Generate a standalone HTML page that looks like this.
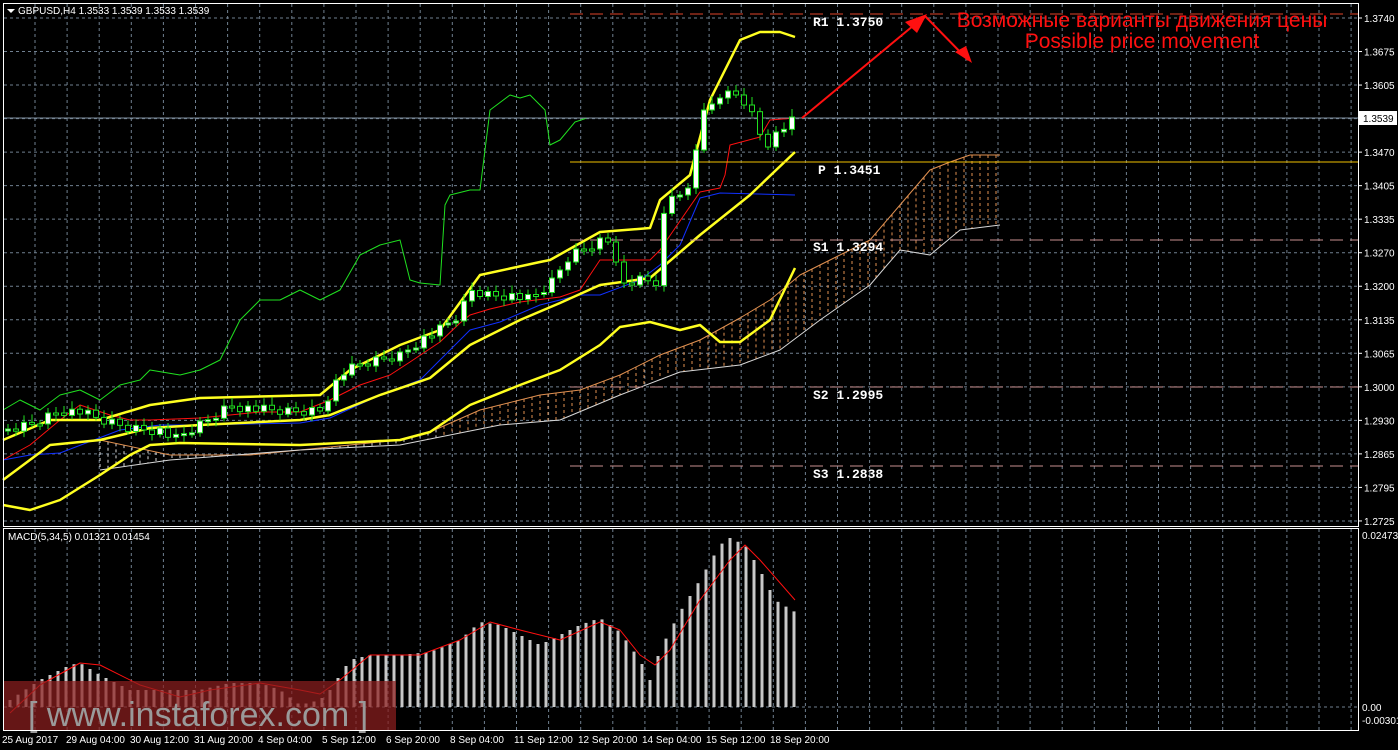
<!DOCTYPE html>
<html><head><meta charset="utf-8"><style>
html,body{margin:0;padding:0;background:#000;width:1398px;height:750px;overflow:hidden}
svg{display:block}
text{font-family:"Liberation Sans",sans-serif}
.ax{fill:#fff;font-size:10px}
.pv{fill:#fff;font-family:"Liberation Mono",monospace;font-size:13px;font-weight:bold}
</style></head><body>
<svg id="s" width="1398" height="750" xmlns="http://www.w3.org/2000/svg">
<rect width="1398" height="750" fill="#000"/>
<g id="grid"></g>
<g id="cloud"></g>
<g id="lines"></g>
<line x1="570" y1="14" x2="1358" y2="14" stroke="#e0442a" stroke-width="1" stroke-dasharray="13,7"/>
<line x1="570" y1="162" x2="1358" y2="162" stroke="#f0c000" stroke-width="1"/>
<line x1="570" y1="240" x2="1358" y2="240" stroke="#c89090" stroke-width="1" stroke-dasharray="13,7"/>
<line x1="570" y1="387" x2="1358" y2="387" stroke="#c89090" stroke-width="1" stroke-dasharray="13,7"/>
<line x1="570" y1="466" x2="1358" y2="466" stroke="#c89090" stroke-width="1" stroke-dasharray="13,7"/>
<text class="pv" x="813" y="26">R1 1.3750</text>
<text class="pv" x="818" y="174">P 1.3451</text>
<text class="pv" x="813" y="251">S1 1.3294</text>
<text class="pv" x="813" y="399">S2 1.2995</text>
<text class="pv" x="813" y="478">S3 1.2838</text>
<line x1="3" y1="118" x2="1358" y2="118" stroke="#8090a0" stroke-width="1"/>
<g id="candles"></g>
<g id="macd"></g>
<g stroke="#ff1010" stroke-width="2" fill="none">
<line x1="802" y1="118" x2="925" y2="16"/>
<line x1="925" y1="16" x2="968" y2="60"/>
</g>
<polygon points="927,14 905,22 917,33" fill="#ff1010"/>
<polygon points="972,63 955,52 966,46" fill="#ff1010"/>
<text x="1142" y="27" text-anchor="middle" fill="#ff1010" font-size="21">Возможные варианты движения цены</text>
<text x="1142" y="48" text-anchor="middle" fill="#ff1010" font-size="21">Possible price movement</text>
<polygon points="7,9 15,9 11,13" fill="#fff"/>
<text x="18" y="14" fill="#fff" font-size="10">GBPUSD,H4  1.3533 1.3539 1.3533 1.3539</text>
<text x="8" y="540" fill="#fff" font-size="10">MACD(5,34,5) 0.01321 0.01454</text>
<rect x="3" y="681" width="393" height="49" fill="rgba(140,30,30,0.72)"/>
<text x="28" y="726" fill="#9a9a9a" font-size="34">[ www.instaforex.com ]</text>
<rect x="3.5" y="3.5" width="1355" height="523" fill="none" stroke="#fff"/>
<rect x="3.5" y="528.5" width="1355" height="202" fill="none" stroke="#fff"/>
<rect x="1359" y="111" width="38" height="14" fill="#fff"/>
<text x="1363" y="122" fill="#000" font-size="10">1.3539</text>
<g id="axis"></g>
<text class="ax" x="1362" y="539">0.02473</text>
<text class="ax" x="1362" y="711">0.00</text>
<text class="ax" x="1362" y="724">-0.00301</text>
<g class="ax">
<text x="2" y="743">25 Aug 2017</text><text x="66" y="743">29 Aug 04:00</text><text x="130" y="743">30 Aug 12:00</text><text x="194" y="743">31 Aug 20:00</text><text x="258" y="743">4 Sep 04:00</text><text x="322" y="743">5 Sep 12:00</text><text x="386" y="743">6 Sep 20:00</text><text x="450" y="743">8 Sep 04:00</text><text x="514" y="743">11 Sep 12:00</text><text x="578" y="743">12 Sep 20:00</text><text x="642" y="743">14 Sep 04:00</text><text x="706" y="743">15 Sep 12:00</text><text x="770" y="743">18 Sep 20:00</text>
</g>
</svg>
<script>
(function(){
var NS="http://www.w3.org/2000/svg";
function el(p,t,a){var e=document.createElementNS(NS,t);for(var k in a)e.setAttribute(k,a[k]);document.getElementById(p).appendChild(e);return e;}
function interp(pts,x){if(x<=pts[0][0])return pts[0][1];for(var i=1;i<pts.length;i++){if(x<=pts[i][0]){var a=pts[i-1],b=pts[i];return a[1]+(b[1]-a[1])*(x-a[0])/(b[0]-a[0]);}}return pts[pts.length-1][1];}
function pl(p,pts,c,w){el(p,"polyline",{points:pts.map(function(q){return q.join(",")}).join(" "),fill:"none",stroke:c,"stroke-width":w,"stroke-linejoin":"round"});}
var x,y,i;
for(x=35;x<1358;x+=32.1){el("grid","line",{x1:x,y1:4,x2:x,y2:526,stroke:"#708090","stroke-dasharray":"3,3"});el("grid","line",{x1:x,y1:529,x2:x,y2:730,stroke:"#708090","stroke-dasharray":"3,3"});}
var labs=["1.3740","1.3675","1.3605","","1.3470","1.3405","1.3335","1.3270","1.3200","1.3135","1.3065","1.3000","1.2930","1.2865","1.2795","1.2725"];
for(i=0;i<16;i++){y=18+i*33.53;el("grid","line",{x1:4,y1:y,x2:1358,y2:y,stroke:"#708090","stroke-dasharray":"3,3"});
 el("grid","line",{x1:1358,y1:y,x2:1362,y2:y,stroke:"#fff"});
 if(labs[i]){var t=el("axis","text",{x:1364,y:y+4,"class":"ax"});t.textContent=labs[i];}}
el("grid","line",{x1:4,y1:707,x2:1358,y2:707,stroke:"#708090","stroke-dasharray":"3,3"});
var cu=[[100,440],[170,455],[250,455],[300,450],[400,440],[430,432],[480,410],[540,395],[580,390],[620,375],[660,355],[700,340],[740,318],[770,300],[800,275],[830,260],[870,240],[900,205],[930,170],[950,162],[970,155],[1000,155]];
var cl=[[100,470],[170,460],[300,450],[400,445],[500,425],[560,420],[620,395],[680,372],[740,365],[780,350],[820,320],[870,285],[900,250],[930,255],[960,230],[1000,225]];
for(x=100;x<=1000;x+=8){var ya=interp(cu,x),yb=interp(cl,x);var col=x<440?"#d8d8d8":"#e09050";el("cloud","line",{x1:x,y1:ya,x2:x,y2:yb,stroke:col,"stroke-dasharray":"3,3"});}
pl("cloud",cu,"#e09050",1);pl("cloud",cl,"#d8d8d8",1);
pl("lines",[[3,410],[20,400],[40,410],[60,395],[80,390],[100,400],[120,385],[140,380],[150,370],[180,375],[200,370],[220,360],[240,320],[260,300],[280,300],[300,290],[320,300],[340,290],[360,255],[380,245],[400,240],[410,280],[420,283],[440,285],[445,205],[450,195],[470,190],[480,190],[490,110],[510,95],[520,98],[530,95],[545,110],[550,145],[560,140],[575,122],[587,118]],"#20e020",1);
pl("lines",[[3,460],[30,445],[60,420],[80,405],[110,415],[130,420],[150,420],[200,418],[260,412],[300,412],[330,400],[360,385],[390,375],[410,362],[440,342],[460,323],[470,315],[490,309],[520,302],[560,297],[580,290],[600,260],[650,260],[660,250],[700,192],[720,188],[725,175],[730,145],[760,137],[770,120],[795,118]],"#ff1010",1);
pl("lines",[[3,460],[30,455],[60,453],[120,430],[160,425],[200,425],[300,423],[330,418],[380,395],[420,380],[445,355],[470,330],[500,322],[540,305],[580,295],[600,295],[640,280],[660,265],[680,245],[700,198],[720,193],[795,195]],"#1030ff",1);
pl("lines",[[3,440],[50,420],[100,420],[150,405],[200,398],[320,395],[350,370],[400,345],[440,330],[480,275],[540,262],[550,260],[600,232],[650,228],[660,200],[690,175],[710,100],[740,40],[760,32],[780,32],[795,37]],"#ffff20",2.5);
pl("lines",[[3,480],[50,445],[100,440],[150,428],[200,425],[300,420],[330,415],[380,395],[430,378],[470,345],[520,320],[560,303],[600,285],[650,278],[700,235],[750,195],[795,152]],"#ffff20",2.5);
pl("lines",[[3,505],[30,510],[60,500],[100,475],[130,455],[150,445],[180,443],[300,445],[400,440],[430,432],[470,405],[520,385],[560,370],[600,345],[620,327],[650,322],[680,330],[700,325],[720,342],[740,342],[770,320],[795,268]],"#ffff20",2.5);
var cp=[[8,430],[30,425],[60,410],[80,412],[100,420],[130,428],[160,430],[175,440],[200,425],[230,405],[260,410],[290,412],[320,410],[340,375],[360,365],[380,360],[400,355],[420,340],[440,330],[460,315],[470,290],[490,295],[510,295],[530,300],[550,285],[570,255],[600,240],[610,240],[620,285],[640,280],[660,282],[665,200],[680,190],[690,190],[700,120],[720,95],[740,95],[750,110],[765,145],[780,130],[795,120]];
var prev=interp(cp,0),k=0;
for(x=8;x<=795;x+=8){k++;var cc=interp(cp,x)+((k*37)%11-5);var oo=prev;var hi=Math.min(oo,cc),lo=Math.max(oo,cc);if(lo-hi<2)lo=hi+2;
 el("candles","line",{x1:x,y1:hi-4-(k%5),x2:x,y2:lo+3+(k%4),stroke:"#20e020"});
 el("candles","rect",{x:x-2.5,y:hi,width:5,height:lo-hi,fill:cc<oo?"#fff":"#000",stroke:"#20e020","stroke-width":1});prev=cc;}
var mb=[[10,700],[40,680],[70,665],[80,663],[100,675],[130,690],[160,690],[200,690],[230,683],[260,683],[280,690],[300,705],[320,700],[330,690],[350,660],[370,655],[400,655],[430,652],[460,640],[480,622],[500,625],[520,635],[540,645],[560,635],[580,625],[600,618],[620,632],[640,660],[650,680],[660,650],[680,612],[700,580],[720,545],[730,538],[745,545],[760,570],[775,600],[795,612]];
for(x=10;x<=795;x+=8){y=interp(mb,x);el("macd","rect",{x:x-1.5,y:y,width:3,height:707-y,fill:"#c8c8c8"});}
pl("macd",[[10,713],[40,685],[80,663],[100,665],[140,685],[180,697],[210,690],[260,683],[300,690],[320,694],[340,680],[370,655],[420,655],[460,640],[490,622],[520,630],[560,640],[600,622],[620,630],[640,655],[655,665],[670,650],[700,600],[730,560],[745,545],[760,560],[795,600]],"#ff1010",1);
})();
</script>
</body></html>
